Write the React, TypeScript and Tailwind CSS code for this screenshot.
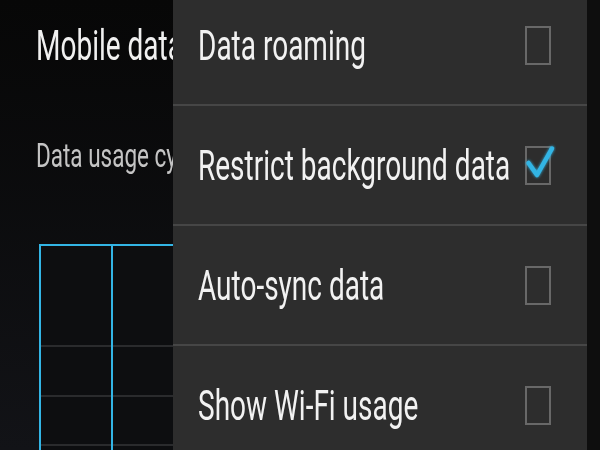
import React from 'react';

type Row = { label: string; checked: boolean };

const rows: Row[] = [
  { label: 'Data roaming', checked: false },
  { label: 'Restrict background data', checked: true },
  { label: 'Auto-sync data', checked: false },
  { label: 'Show Wi-Fi usage', checked: false },
];

function CheckBox({ checked }: { checked: boolean }) {
  return (
    <svg width="34" height="46" viewBox="0 0 34 46" className="mr-[31px] mb-[3px] shrink-0" aria-hidden="true">
      <defs>
        <filter id="glow" x="-50%" y="-50%" width="200%" height="200%">
          <feGaussianBlur stdDeviation="1.6" result="b" />
          <feMerge>
            <feMergeNode in="b" />
            <feMergeNode in="SourceGraphic" />
          </feMerge>
        </filter>
      </defs>
      <rect x="4" y="5" width="24" height="37" fill="none" stroke="#686868" strokeWidth="2" />
      {checked && (
        <path
          d="M6.5 21 L15 33 L30 6.5"
          fill="none"
          stroke="#33b5e5"
          strokeWidth="4.5"
          strokeLinecap="round"
          strokeLinejoin="round"
          filter="url(#glow)"
        />
      )}
    </svg>
  );
}

export default function App() {
  return (
    <div
      className="relative w-[600px] h-[450px] overflow-hidden bg-gradient-to-b from-[#070707] to-[#121317]"
      style={{ fontFamily: 'Roboto, "Noto Sans", sans-serif' }}
    >
      {/* Settings page behind the menu */}
      <div className="pl-[36px] pt-[32px]">
        <div className="h-[28px] text-[28px] leading-none text-[#f0f0f0] whitespace-nowrap">
          <span className="inline-block origin-left scale-y-[1.55]">Mobile data</span>
        </div>
        <div className="mt-[84px] h-[22px] text-[22.5px] leading-none text-[#c4c4c4] whitespace-nowrap">
          <span className="inline-block origin-left scale-y-[1.5]">Data usage cycle</span>
        </div>

        {/* Chart */}
        <div className="ml-[3px] mt-[78px] w-[220px] h-[240px] border-l-2 border-t-2 border-[#33b5e5] bg-[#0d0e10] flex">
          <div className="w-[72px] border-r-2 border-[#33b5e5] flex flex-col">
            <div className="h-[101px] border-b-2 border-[#2a2b2d]" />
            <div className="h-[50px] border-b-2 border-[#2a2b2d]" />
            <div className="h-[49px] border-b-2 border-[#2a2b2d]" />
          </div>
          <div className="flex-1 flex flex-col">
            <div className="h-[101px] border-b-2 border-[#2a2b2d]" />
            <div className="h-[50px] border-b-2 border-[#2a2b2d]" />
            <div className="h-[49px] border-b-2 border-[#2a2b2d]" />
          </div>
        </div>
      </div>

      {/* Overflow menu */}
      <div className="absolute left-[173px] top-0 w-[414px] h-full bg-[#2d2d2d]">
        <div className="-mt-[14px] flex flex-col">
          {rows.map((row, i) => (
            <div key={row.label} className="flex flex-col">
              {i > 0 && <div className="h-[2px] bg-[#464646]" />}
              <div className="h-[118px] pt-[2px] pl-[25px] flex items-center">
                <div className="flex-1 h-[28px] text-[28px] leading-none text-[#f2f2f2] whitespace-nowrap">
                  <span className="inline-block origin-left scale-y-[1.55]">{row.label}</span>
                </div>
                <CheckBox checked={row.checked} />
              </div>
            </div>
          ))}
        </div>
      </div>

      <div className="absolute left-[587px] top-0 w-[13px] h-full bg-[#0e0e0e]" />
    </div>
  );
}
